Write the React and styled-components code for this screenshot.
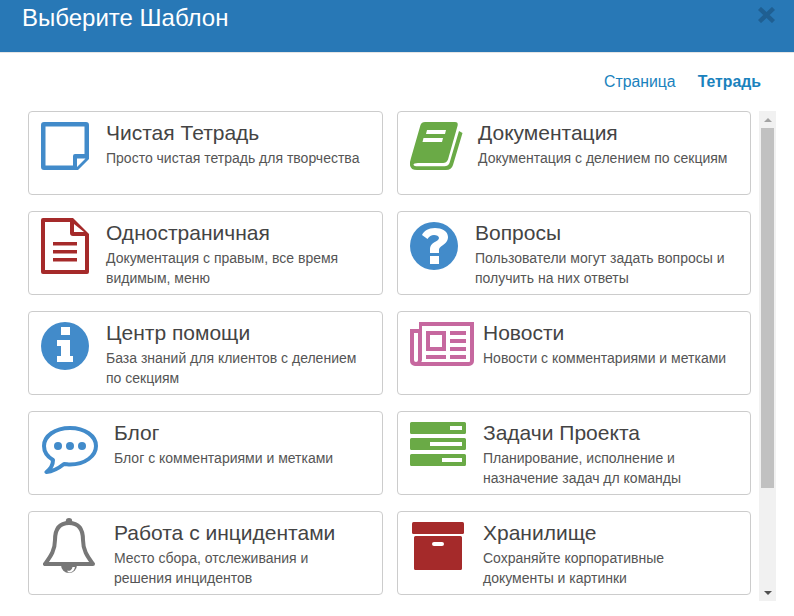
import React from "react";
import styled, { createGlobalStyle } from "styled-components";

const Global = createGlobalStyle`
  html, body { margin: 0; padding: 0; background: #fff; }
  body { font-family: "Liberation Sans", Arial, sans-serif; color: #444; overflow: hidden; }
`;

const Modal = styled.div`
  width: 794px;
  height: 616px;
  overflow: hidden;
  background: #fff;
`;

const Header = styled.header`
  height: 52px;
  box-sizing: content-box;
  background: #2878b6;
  border-bottom: 1px solid #e5e5e5;
  display: flex;
  justify-content: space-between;
  align-items: flex-start;
  padding: 0 19px 0 22px;
`;

const Title = styled.h1`
  margin: 4px 0 0;
  font-size: 24px;
  line-height: 28px;
  font-weight: 400;
  color: #fff;
`;

const Close = styled.button`
  margin: 7px 0 0;
  padding: 0;
  border: 0;
  background: none;
  display: block;
  svg { display: block; }
`;

const Tabs = styled.nav`
  display: flex;
  justify-content: flex-end;
  gap: 22px;
  padding: 19px 33px 0 0;
  height: 39px;
  box-sizing: content-box;
`;

const Tab = styled.a`
  font-size: 15.8px;
  line-height: 20px;
  color: #1a82bd;
  font-weight: ${(p) => (p.$active ? 700 : 400)};
`;

const Scroller = styled.div`
  display: flex;
  height: 490px;
  padding-left: 28px;
`;

const Grid = styled.div`
  display: grid;
  grid-template-columns: 355px 354px;
  grid-auto-rows: 84px;
  column-gap: 14px;
  row-gap: 16px;
`;

const Card = styled.div`
  box-sizing: border-box;
  display: flex;
  align-items: flex-start;
  padding: 10px 12px;
  border: 1px solid #ccc;
  border-radius: 4px;
  background: #fff;
`;

const IconSlot = styled.div`
  flex: none;
  width: ${(p) => p.$w}px;
  display: flex;
  margin-top: ${(p) => p.$top || 0}px;
  margin-bottom: ${(p) => -(p.$top || 0)}px;
  padding-left: ${(p) => p.$left || 0}px;
  box-sizing: border-box;
  svg { display: block; }
`;

const Body = styled.div`
  min-width: 0;
  margin-top: -1px;
  padding-right: 10px;
`;

const CardTitle = styled.div`
  font-size: 21px;
  line-height: 24px;
  color: #444;
`;

const Desc = styled.div`
  margin-top: 3px;
  font-size: 14px;
  line-height: 20px;
  color: #555;
`;

const Track = styled.div`
  flex: none;
  width: 17px;
  height: 490px;
  margin-left: 8px;
  background: #f1f1f1;
  display: flex;
  flex-direction: column;
  align-items: center;
`;

const ArrowCell = styled.div`
  flex: none;
  height: 17px;
  display: flex;
  align-items: center;
  justify-content: center;
`;

const Arrow = styled.span`
  width: 0;
  height: 0;
  border-left: 4px solid transparent;
  border-right: 4px solid transparent;
  ${(p) => (p.$down ? "border-top: 4px solid #505050;" : "border-bottom: 4px solid #a3a3a3;")}
`;

const Thumb = styled.div`
  flex: none;
  width: 13px;
  height: ${(p) => p.$h}px;
  background: #c1c1c1;
`;

const TrackRest = styled.div`
  flex: 1;
`;

const BLUE = "#428bca";
const GREEN = "#6aaa46";
const RED = "#a52a2a";
const PINK = "#c6689f";
const GRAY = "#777";

const NoteIcon = () => (
  <svg width="48" height="48" viewBox="0 0 48 48">
    <path
      fill={BLUE}
      fillRule="evenodd"
      d="M3 0H45a3 3 0 0 1 3 3V37L37 48H3a3 3 0 0 1-3-3V3A3 3 0 0 1 3 0ZM4.5 4.5V43.5H32V34a2 2 0 0 1 2-2H43.5V4.5ZM36 36.5V45L44.5 36.5Z"
    />
  </svg>
);

const BookIcon = () => (
  <svg width="53" height="48" viewBox="0 0 53 48">
    <path
      fill={GREEN}
      d="M10.5 3Q11.5 0 15 0H45Q48.5 0 47.5 4L38 37.5Q36.5 41 33 41H8Q3.5 41 3.5 42.7Q4 44.3 8 44.3H34.5Q38 44.3 39.5 41L49 9L52.5 11L43 43Q41.5 48 36 48H7Q-1 48 0 40Q.5 38 1 36Z"
    />
    <path fill="#fff" d="M17 8H36L35 12H16ZM13.5 16H33L32 20H12.5Z" />
  </svg>
);

const DocIcon = () => (
  <svg width="48" height="56" viewBox="0 0 48 56">
    <path
      fill={RED}
      fillRule="evenodd"
      d="M2 0H32L48 16V54a2 2 0 0 1-2 2H2a2 2 0 0 1-2-2V2A2 2 0 0 1 2 0ZM4 4V52H44V18H32a3 3 0 0 1-3-3V4ZM33 6V14H43ZM12 24H36V27.5H12ZM12 32H36V35.5H12ZM12 40H36V43.5H12Z"
    />
  </svg>
);

const QuestionIcon = () => (
  <svg width="48" height="48" viewBox="0 0 48 48">
    <circle cx="24" cy="24" r="24" fill={BLUE} />
    <path
      fill="#fff"
      d="M20 31H29V27.5Q29 26 31 24.5C35 21.8 38 19.5 38 15C38 9 31.5 6 25 6C18 6 14 9 12 13L17.5 17Q20 13 24 13C26.5 13 29 14 29 16C29 18 26.5 19 24 20.5C21.5 22 20 24 20 27ZM20 34H29V42H20Z"
    />
  </svg>
);

const InfoIcon = () => (
  <svg width="48" height="48" viewBox="0 0 48 48">
    <circle cx="24" cy="24" r="24" fill={BLUE} />
    <path fill="#fff" d="M20 5H29V13H20ZM16 18H29V34H32V40H16V34H20V24H16Z" />
  </svg>
);

const NewsIcon = () => (
  <svg width="64" height="44" viewBox="0 0 64 44">
    <path
      fill={PINK}
      fillRule="evenodd"
      d="M9 0H64V39a5 5 0 0 1-5 5H5a5 5 0 0 1-5-5V7H9ZM4 11V38a2 2 0 0 0 4 0V11ZM12 4V38a6 6 0 0 1-.7 2H59a1 1 0 0 0 1-1V4Z"
    />
    <path
      fill={PINK}
      fillRule="evenodd"
      d="M16 9H36V29H16ZM20 13V25H32V13ZM40 9H56V13H40ZM40 17H56V21H40ZM40 25H56V29H40ZM16 33H36V37H16ZM40 33H56V37H40Z"
    />
  </svg>
);

const BubbleIcon = () => (
  <svg width="56" height="48" viewBox="0 0 56 48">
    <path
      fill="none"
      stroke={BLUE}
      strokeWidth="4"
      strokeLinejoin="round"
      d="M28 2C13 2 2 10 2 20C2 26 6 31 11 34C11 38 8.5 43 4.5 46C11 45.5 17 42 22 38C24 38 26 38.5 28 38.5C43 38.5 54 30 54 20C54 10 43 2 28 2Z"
    />
    <circle cx="16" cy="20" r="4" fill={BLUE} />
    <circle cx="28" cy="20" r="4" fill={BLUE} />
    <circle cx="40" cy="20" r="4" fill={BLUE} />
  </svg>
);

const BellIcon = () => (
  <svg width="52" height="56" viewBox="0 0 52 56">
    <path
      fill={GRAY}
      d="M18 47H34A8 8 0 0 1 18 47ZM26 54.5A6.5 6.5 0 0 0 32 49H29.5A4 4 0 0 1 24 52.5Q25 54.5 26 54.5Z"
    />
    <circle cx="26" cy="3.2" r="3.2" fill={GRAY} />
    <path
      fill="#fff"
      stroke={GRAY}
      strokeWidth="4"
      strokeLinejoin="round"
      d="M26 5C15 5 12 13 12 22C12 33 7 39 2 46H50C45 39 40 33 40 22C40 13 37 5 26 5Z"
    />
  </svg>
);

const TaskBar = ({ y, from }) => (
  <path
    fill={GREEN}
    fillRule="evenodd"
    d={`M1.5 ${y}H54.5A1.5 1.5 0 0 1 56 ${y + 1.5}V${y + 10.5}A1.5 1.5 0 0 1 54.5 ${y + 12}H1.5A1.5 1.5 0 0 1 0 ${y + 10.5}V${y + 1.5}A1.5 1.5 0 0 1 1.5 ${y}ZM${from} ${y + 4}V${y + 8}H52V${y + 4}Z`}
  />
);

const TasksIcon = () => (
  <svg width="56" height="44" viewBox="0 0 56 44">
    <TaskBar y={0} from={40} />
    <TaskBar y={16} from={20} />
    <TaskBar y={32} from={32} />
  </svg>
);

const BoxIcon = () => (
  <svg width="52" height="48" viewBox="0 0 52 48">
    <rect x="0" y="0" width="52" height="12" rx="1.5" fill={RED} />
    <path
      fill={RED}
      fillRule="evenodd"
      d="M3.5 14H48.5A1.5 1.5 0 0 1 50 15.5V46.5A1.5 1.5 0 0 1 48.5 48H3.5A1.5 1.5 0 0 1 2 46.5V15.5A1.5 1.5 0 0 1 3.5 14ZM22 20A2 2 0 0 0 22 24H30A2 2 0 0 0 30 20Z"
    />
  </svg>
);

const cards = [
  { Icon: NoteIcon, w: 65, title: "Чистая Тетрадь", desc: "Просто чистая тетрадь для творчества" },
  { Icon: BookIcon, w: 68, title: "Документация", desc: "Документация с делением по секциям" },
  { Icon: DocIcon, w: 65, top: -4, title: "Одностраничная", desc: "Документация с правым, все время видимым, меню" },
  { Icon: QuestionIcon, w: 65, title: "Вопросы", desc: "Пользователи могут задать вопросы и получить на них ответы" },
  { Icon: InfoIcon, w: 65, title: "Центр помощи", desc: "База знаний для клиентов с делением по секциям" },
  { Icon: NewsIcon, w: 73, title: "Новости", desc: "Новости с комментариями и метками" },
  { Icon: BubbleIcon, w: 73, top: 4, left: 1, title: "Блог", desc: "Блог с комментариями и метками" },
  { Icon: TasksIcon, w: 73, title: "Задачи Проекта", desc: "Планирование, исполнение и назначение задач дл команды" },
  { Icon: BellIcon, w: 73, top: -4, left: 2, title: "Работа с инцидентами", desc: "Место сбора, отслеживания и решения инцидентов" },
  { Icon: BoxIcon, w: 73, left: 2, title: "Хранилище", desc: "Сохраняйте корпоративные документы и картинки" },
];

export default function App() {
  return (
    <Modal>
      <Global />
      <Header>
        <Title>Выберите Шаблон</Title>
        <Close aria-label="Закрыть">
          <svg width="17" height="16" viewBox="0 0 17 16">
            <path stroke="#1f5f92" strokeWidth="4.4" d="M1.5 1.5L15.5 14.5M15.5 1.5L1.5 14.5" />
          </svg>
        </Close>
      </Header>
      <Tabs>
        <Tab>Страница</Tab>
        <Tab $active>Тетрадь</Tab>
      </Tabs>
      <Scroller>
        <Grid>
          {cards.map(({ Icon, w, top, left, title, desc }) => (
            <Card key={title}>
              <IconSlot $w={w} $top={top} $left={left}>
                <Icon />
              </IconSlot>
              <Body>
                <CardTitle>{title}</CardTitle>
                <Desc>{desc}</Desc>
              </Body>
            </Card>
          ))}
        </Grid>
        <Track>
          <ArrowCell>
            <Arrow />
          </ArrowCell>
          <Thumb $h={360} />
          <TrackRest />
          <ArrowCell>
            <Arrow $down />
          </ArrowCell>
        </Track>
      </Scroller>
    </Modal>
  );
}
